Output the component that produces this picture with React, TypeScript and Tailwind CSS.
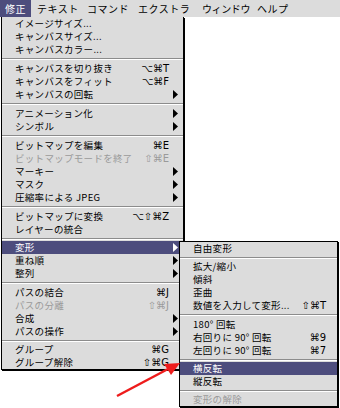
import React from 'react';

type Item =
  | { sep: 5 | 6 }
  | { label: string; key?: string; sub?: boolean; disabled?: boolean; active?: boolean };

const HILITE = 'bg-[#4d4d7d]';

const mainItems: Item[] = [
  { label: 'イメージサイズ...' },
  { label: 'キャンバスサイズ...' },
  { label: 'キャンバスカラー...' },
  { sep: 6 },
  { label: 'キャンバスを切り抜き', key: '⌥⌘T' },
  { label: 'キャンバスをフィット', key: '⌥⌘F' },
  { label: 'キャンバスの回転', sub: true },
  { sep: 6 },
  { label: 'アニメーション化', sub: true },
  { label: 'シンボル', sub: true },
  { sep: 6 },
  { label: 'ビットマップを編集', key: '⌘E' },
  { label: 'ビットマップモードを終了', key: '⇧⌘E', disabled: true },
  { label: 'マーキー', sub: true },
  { label: 'マスク', sub: true },
  { label: '圧縮率による JPEG', sub: true },
  { sep: 6 },
  { label: 'ビットマップに変換', key: '⌥⇧⌘Z' },
  { label: 'レイヤーの統合' },
  { sep: 5 },
  { label: '変形', sub: true, active: true },
  { label: '重ね順', sub: true },
  { label: '整列', sub: true },
  { sep: 6 },
  { label: 'パスの結合', key: '⌘J' },
  { label: 'パスの分離', key: '⇧⌘J', disabled: true },
  { label: '合成', sub: true },
  { label: 'パスの操作', sub: true },
  { sep: 5 },
  { label: 'グループ', key: '⌘G' },
  { label: 'グループ解除', key: '⇧⌘G' },
];

const subItems: Item[] = [
  { label: '自由変形' },
  { sep: 5 },
  { label: '拡大/縮小' },
  { label: '傾斜' },
  { label: '歪曲' },
  { label: '数値を入力して変形...', key: '⇧⌘T' },
  { sep: 6 },
  { label: '180° 回転' },
  { label: '右回りに 90° 回転', key: '⌘9' },
  { label: '左回りに 90° 回転', key: '⌘7' },
  { sep: 5 },
  { label: '横反転', active: true },
  { label: '縦反転' },
  { sep: 5 },
  { label: '変形の解除', disabled: true },
];

const Triangle: React.FC<{ white?: boolean }> = ({ white }) => (
  <svg width="5" height="9" viewBox="0 0 5 9">
    <polygon points="0,0 5,4.5 0,9" fill={white ? '#fff' : '#000'} />
  </svg>
);

const Separator: React.FC<{ h: 5 | 6 }> = ({ h }) => (
  <div className={`flex items-center ${h === 6 ? 'h-[6px]' : 'h-[5px]'}`}>
    <div className="w-full h-[2px] border-t border-[#8c8c8c] border-b border-b-white" />
  </div>
);

// label text: CJK font, slightly airy spacing like the old bitmap font
const labelCls = "font-['Noto_Sans_CJK_JP','Liberation_Sans',sans-serif] text-[9.5px] leading-[13px] tracking-[0.3px] whitespace-nowrap";
const keyCls = "font-['DejaVu_Sans','Liberation_Sans',sans-serif] text-[10px] leading-[13px] whitespace-nowrap";

const SubMenu: React.FC = () => (
  <div className="absolute left-[177px] top-0 w-[159px] bg-[#dcdcdc] border border-black shadow-[1px_1px_0_#000] z-10">
    {subItems.map((it, i) =>
      'sep' in it ? (
        <Separator key={i} h={it.sep} />
      ) : (
        <div
          key={i}
          className={`flex items-center h-[13px] pl-[13px] pr-[11px] ${
            it.active ? `${HILITE} text-white` : it.disabled ? 'text-[#9a9a9a]' : 'text-black'
          }`}
        >
          <span className={`flex-1 ${labelCls}`}>{it.label}</span>
          {it.key && <span className={keyCls}>{it.key}</span>}
        </div>
      )
    )}
  </div>
);

const MenuBar: React.FC = () => (
  <div className="flex items-center h-[17px] bg-[#dcdcdc] text-black font-['Noto_Sans_CJK_JP',sans-serif] text-[10px] tracking-[0.5px] leading-[17px] whitespace-nowrap">
    <span className={`w-[31px] h-full flex items-center justify-center text-white ${HILITE}`}>修正</span>
    <span className="ml-[6px] w-[50px]">テキスト</span>
    <span className="w-[51px]">コマンド</span>
    <span className="w-[64px]">エクストラ</span>
    <span className="w-[55px] tracking-[-0.4px]">ウィンドウ</span>
    <span>ヘルプ</span>
  </div>
);

export default function App() {
  return (
    <div className="relative w-[340px] h-[408px] bg-white overflow-hidden">
      <MenuBar />
      <div className="ml-[1px] w-[183px] bg-[#dcdcdc] border-x border-b border-black shadow-[1px_1px_0_#000]">
        {mainItems.map((it, i) =>
          'sep' in it ? (
            <Separator key={i} h={it.sep} />
          ) : (
            <div
              key={i}
              className={`relative flex items-center h-[13px] pl-[13px] pr-[5px] ${
                it.active ? `${HILITE} text-white` : it.disabled ? 'text-[#9a9a9a]' : 'text-black'
              }`}
            >
              <span className={`flex-1 ${labelCls}`}>{it.label}</span>
              {it.key && <span className={keyCls}>{it.key}</span>}
              <span className="w-[9px] flex justify-end">{it.sub && <Triangle white={it.active} />}</span>
              {it.active && <SubMenu />}
            </div>
          )
        )}
      </div>
      <svg className="absolute left-0 top-0 z-20 pointer-events-none" width="340" height="408">
        <line x1="117" y1="396" x2="168" y2="369" stroke="#ee1c1c" strokeWidth="2.5" />
        <polygon points="180,363 164,364 171,375" fill="#ee1c1c" />
      </svg>
    </div>
  );
}
